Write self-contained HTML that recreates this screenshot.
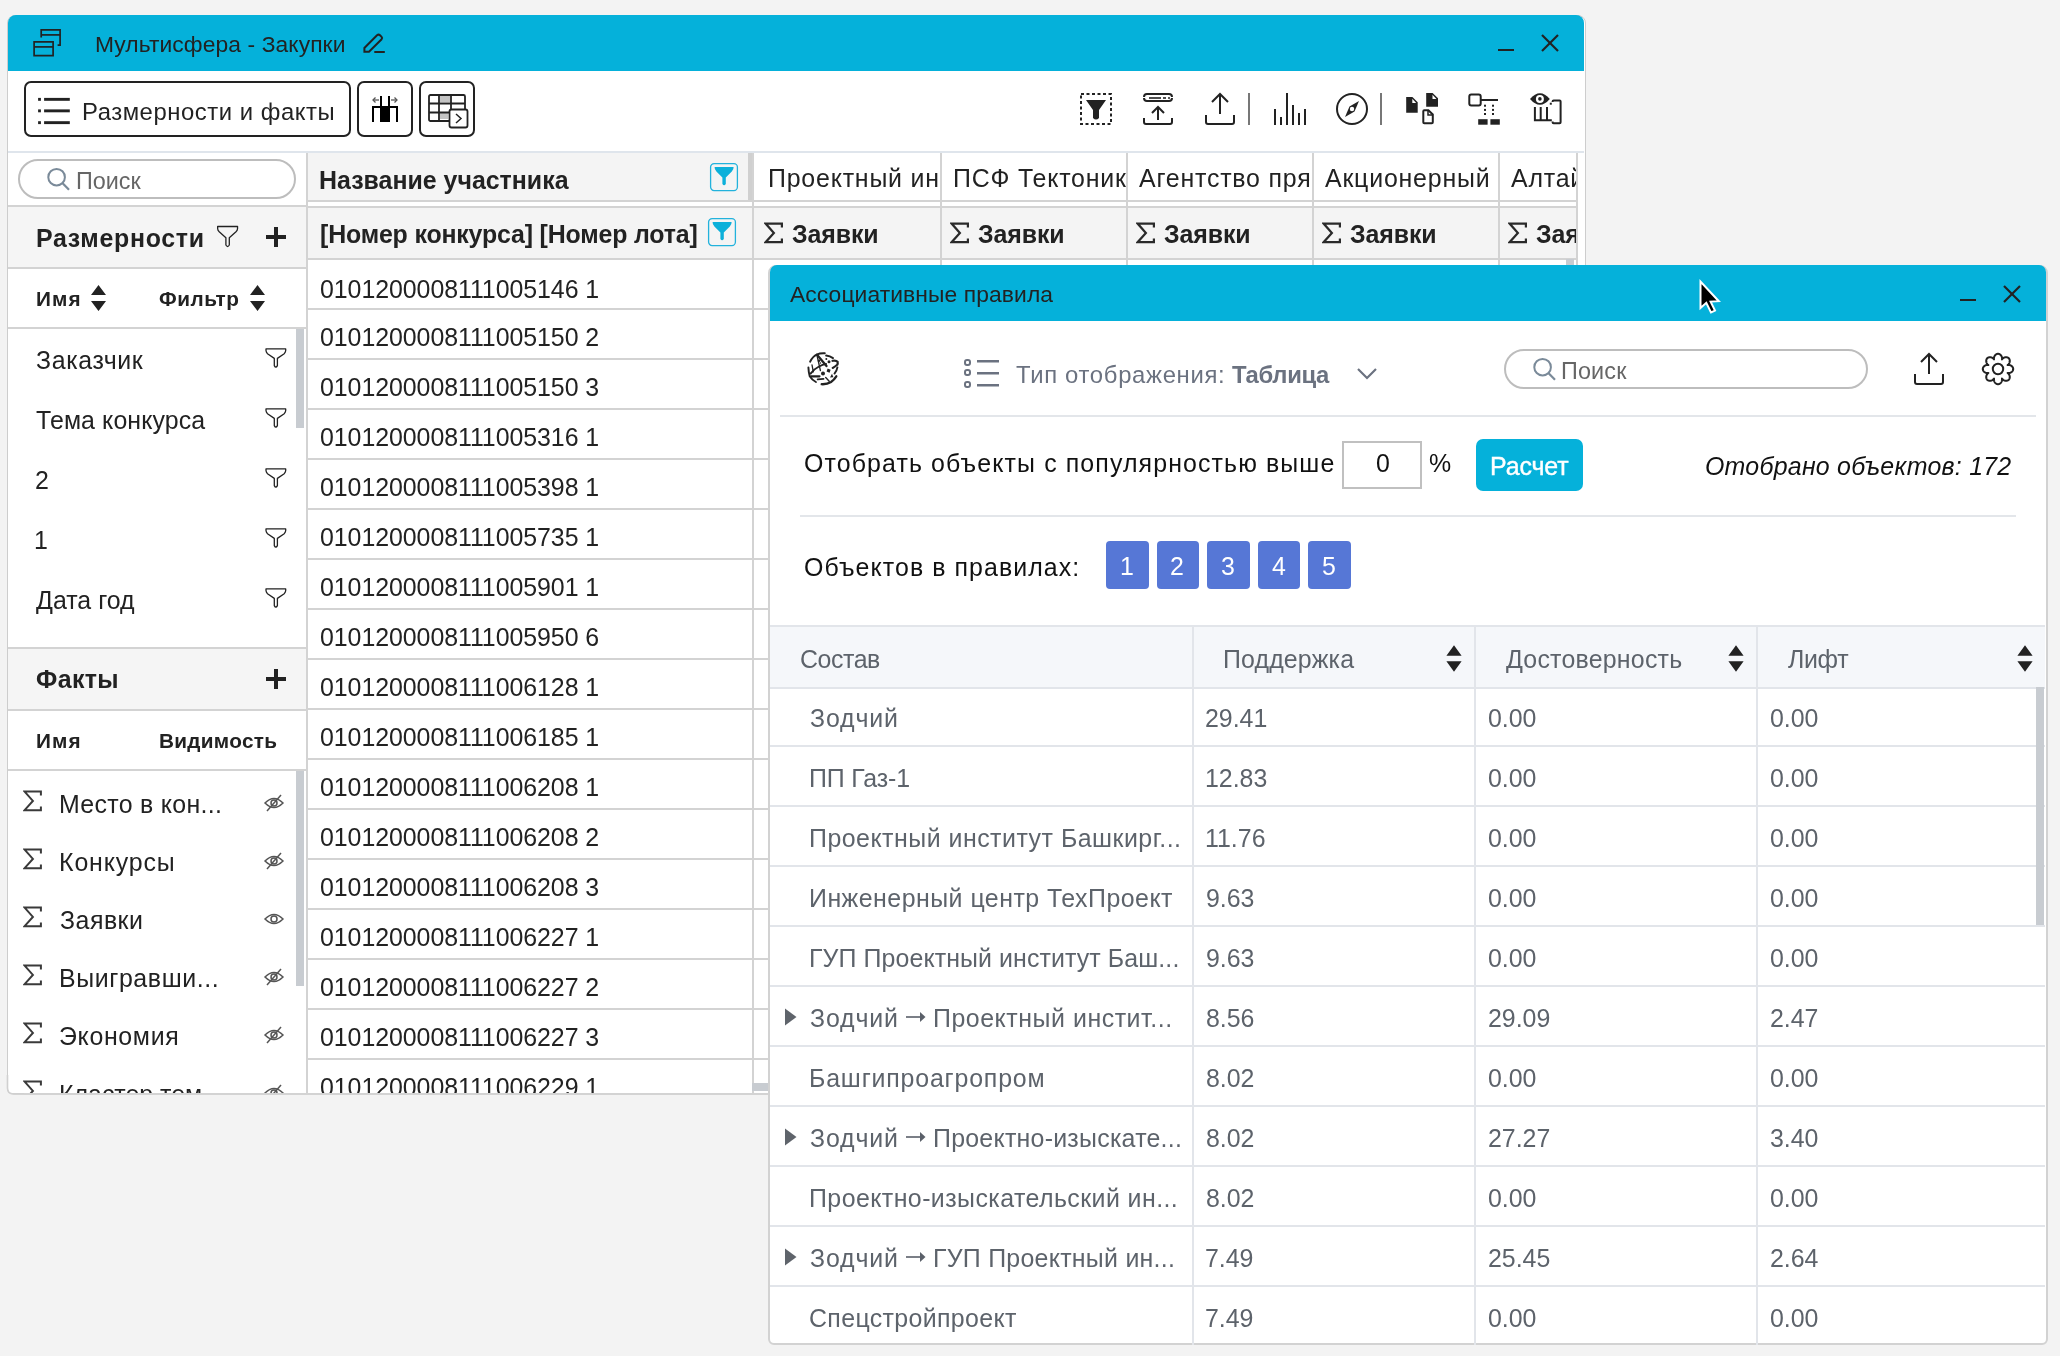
<!DOCTYPE html>
<html><head><meta charset="utf-8"><style>*{margin:0;padding:0}html,body{width:2060px;height:1356px;overflow:hidden;background:#f3f3f3;font-family:"Liberation Sans", sans-serif;color:#222}
.a{position:absolute}.t{position:absolute;will-change:transform;white-space:nowrap;line-height:1;font-family:"Liberation Sans", sans-serif}</style></head><body>
<div class="a" style="left:7px;top:15px;width:1579px;height:1080px;background:#fff;border:1px solid #cdcdcd;box-sizing:border-box;border-radius:8px 8px 6px 6px;overflow:hidden;"></div>
<div class="a" style="left:8px;top:15px;width:1576px;height:56px;background:#05b1da;border-radius:8px 8px 0 0;"></div>
<svg class="a" style="left:30px;top:26px;" width="34" height="34" viewBox="0 0 34 34"><g transform="translate(-30,-26)" fill="none" stroke="#222" stroke-width="1.7"><path d="M34.1 41.8 H53.1 V55.7 H34.1 Z"/><path d="M34.1 46.9 H53.1"/><path d="M41.2 37.4 V29.9 H60.1 V45.2 H57.6"/><path d="M41.2 34.9 H60.1"/></g></svg>
<span class="t" style="left:95.1px;top:33.27px;font-size:22.84px;font-weight:400;color:#222;letter-spacing:0.091px;">Мультисфера - Закупки</span>
<svg class="a" style="left:360px;top:30px;" width="28" height="28" viewBox="0 0 28 28"><path d="M4.4 21.7 V18 L17 5.3 Q18.6 4 20 5.3 L21.6 6.9 Q22.6 8 21.6 9.2 L9 21.7 Z" fill="none" stroke="#222" stroke-width="2" stroke-linejoin="miter"/><rect x="14.3" y="21" width="10.5" height="2" fill="#222"/></svg>
<div class="a" style="left:1498px;top:49px;width:16px;height:2px;background:#222;"></div>
<svg class="a" style="left:1540px;top:33px;" width="20" height="20" viewBox="0 0 20 20"><g stroke="#222" stroke-width="2.2"><line x1="2" y1="2" x2="18" y2="18"/><line x1="18" y1="2" x2="2" y2="18"/></g></svg>
<div class="a" style="left:24px;top:81px;width:327px;height:56px;border:2px solid #222;box-sizing:border-box;border-radius:7px;"></div>
<svg class="a" style="left:36px;top:94px;" width="36" height="32" viewBox="0 0 36 32"><g fill="#222"><rect x="2.1" y="3.9" width="2.8" height="2.9"/><rect x="8.1" y="3.9" width="25.7" height="2.9"/><rect x="2.1" y="15.4" width="2.8" height="2.9"/><rect x="8.1" y="15.4" width="25.7" height="2.9"/><rect x="2.1" y="27.2" width="2.8" height="2.9"/><rect x="8.1" y="27.2" width="25.7" height="2.9"/></g></svg>
<span class="t" style="left:82.0px;top:100.39px;font-size:23.87px;font-weight:400;color:#222;letter-spacing:0.539px;">Размерности и факты</span>
<div class="a" style="left:357px;top:81px;width:56px;height:56px;border:2px solid #222;box-sizing:border-box;border-radius:7px;"></div>
<svg class="a" style="left:370px;top:94px;" width="32" height="30" viewBox="0 0 32 30"><g fill="#000"><rect x="2" y="12" width="26" height="2"/><rect x="2" y="12" width="2" height="16"/><rect x="26" y="12" width="2" height="16"/><rect x="10" y="12" width="10" height="16"/><rect x="10" y="2" width="2" height="12"/><rect x="18" y="2" width="2" height="12"/></g><g stroke="#555" stroke-width="1.3" fill="none"><line x1="3" y1="6" x2="9" y2="6"/><path d="M5.5 3.5 L3 6 L5.5 8.5"/><line x1="21" y1="6" x2="27" y2="6"/><path d="M24.5 3.5 L27 6 L24.5 8.5"/></g></svg>
<div class="a" style="left:419px;top:81px;width:56px;height:56px;border:2px solid #222;box-sizing:border-box;border-radius:7px;"></div>
<svg class="a" style="left:426px;top:92px;" width="44" height="38" viewBox="0 0 44 38"><g><rect x="14" y="3" width="10" height="7" fill="#c4c4c4"/><rect x="14" y="20" width="8" height="7" fill="#c4c4c4"/><g fill="none" stroke="#222" stroke-width="1.8"><rect x="3" y="3" width="36" height="26" rx="1.5"/><line x1="13" y1="3" x2="13" y2="29"/><line x1="25" y1="3" x2="25" y2="29"/><line x1="3" y1="11.5" x2="39" y2="11.5"/><line x1="3" y1="20.5" x2="39" y2="20.5"/></g><rect x="23.5" y="17.5" width="18" height="18" rx="2" fill="#fff" stroke="#222" stroke-width="1.8"/><path d="M30 22 L35 26.5 L30 31" fill="none" stroke="#222" stroke-width="1.5"/></g></svg>
<svg class="a" style="left:1078px;top:91px;" width="36" height="36" viewBox="0 0 36 36"><rect x="3" y="3" width="30" height="30" fill="none" stroke="#222" stroke-width="2" stroke-dasharray="3 2.5"/><path d="M8 9 H28 L21 19 V27 Q18 30 15 27 V19 Z" fill="#222"/></svg>
<svg class="a" style="left:1141px;top:91px;" width="34" height="36" viewBox="0 0 34 36"><g fill="none" stroke="#222" stroke-width="2"><path d="M3 6 Q3 3 6 3 H28 Q31 3 31 6"/><path d="M3 7 Q3 10 6 10 H28 Q31 10 31 7"/><path d="M3 27 V31 Q3 33 5 33 H29 Q31 33 31 31 V27"/><line x1="17" y1="16" x2="17" y2="29"/><path d="M11 22 L17 16 L23 22"/></g><g stroke="#222" stroke-width="1.6"><line x1="8" y1="7" x2="20" y2="7"/><line x1="22" y1="7" x2="25" y2="7"/><line x1="27" y1="7" x2="29" y2="7"/></g></svg>
<svg class="a" style="left:1203px;top:91px;" width="34" height="36" viewBox="0 0 34 36"><g fill="none" stroke="#222" stroke-width="2"><path d="M3 24 V31 Q3 33 5 33 H29 Q31 33 31 31 V24"/><line x1="17" y1="3" x2="17" y2="23"/><path d="M9 11 L17 3 L25 11"/></g></svg>
<div class="a" style="left:1248px;top:93px;width:2px;height:32px;background:#777;"></div>
<svg class="a" style="left:1272px;top:91px;" width="36" height="36" viewBox="0 0 36 36"><g fill="#222"><rect x="2" y="18" width="2" height="16"/><rect x="8" y="26" width="2" height="8"/><rect x="14" y="2" width="2" height="32"/><rect x="20" y="14" width="2" height="20"/><rect x="26" y="22" width="2" height="12"/><rect x="32" y="18" width="2" height="16"/></g></svg>
<svg class="a" style="left:1334px;top:91px;" width="36" height="36" viewBox="0 0 36 36"><circle cx="18" cy="18" r="15" fill="none" stroke="#222" stroke-width="2"/><path d="M25 10 L20.5 20.5 L11 26 L15.5 15.5 Z" fill="#222"/><circle cx="18" cy="18" r="2.2" fill="#fff"/></svg>
<div class="a" style="left:1380px;top:93px;width:2px;height:32px;background:#777;"></div>
<svg class="a" style="left:1400px;top:88px;" width="170" height="42" viewBox="0 0 170 42"><g transform="translate(-1400,-88)">
<path d="M1406.2 97.1 H1412.4 L1417.7 102.2 V112.8 H1406.2 Z" fill="#222"/><path d="M1412.3 98.8 L1416.2 102.9 H1412.3 Z" fill="#fff"/>
<path d="M1426.2 93.1 H1432.6 L1438 98.2 V106.8 H1426.2 Z" fill="#222"/><path d="M1432.5 94.8 L1436.4 98.9 H1432.5 Z" fill="#fff"/>
<path d="M1423.3 111.3 Q1423.3 110.3 1424.3 110.3 H1428.4 L1432.8 114.5 V122.3 Q1432.8 123.3 1431.8 123.3 H1424.3 Q1423.3 123.3 1423.3 122.3 Z" fill="none" stroke="#222" stroke-width="2"/><path d="M1428 110.5 V115 H1432.5" fill="none" stroke="#222" stroke-width="1.5"/>
<rect x="1469.3" y="94.4" width="11.4" height="11.2" rx="2" fill="none" stroke="#222" stroke-width="2"/>
<rect x="1480.7" y="99" width="17.3" height="2" fill="#222"/>
<g fill="#222"><rect x="1484" y="104.7" width="2" height="2"/><rect x="1484" y="108.9" width="2" height="2"/><rect x="1484" y="113" width="2" height="2"/><rect x="1492" y="104.7" width="2" height="2"/><rect x="1492" y="108.9" width="2" height="2"/><rect x="1492" y="113" width="2" height="2"/>
<rect x="1478.2" y="119.2" width="9.4" height="5.5"/><rect x="1490.4" y="119.2" width="9.4" height="5.5"/></g>
<path d="M1530 99 Q1540 87.5 1549.8 99 Q1540 110.5 1530 99 Z" fill="#222"/><circle cx="1539.9" cy="98.9" r="4" fill="#fff"/><circle cx="1539.9" cy="98.9" r="1.8" fill="#222"/>
<g fill="none" stroke="#222" stroke-width="2"><path d="M1534.9 107 V120.2 H1551.8"/><path d="M1540.7 107 V120.2"/><path d="M1547 107 V120.2"/>
<path d="M1552.6 102 V101.6 Q1552.6 100.6 1553.6 100.6 H1559.6 Q1560.6 100.6 1560.6 101.6 V122.3 Q1560.6 123.3 1559.6 123.3 H1553.6 Q1552.6 123.3 1552.6 122.3 V121.5"/></g>
<rect x="1549.8" y="102.7" width="2" height="2" fill="#222"/>
</g></svg>
<div class="a" style="left:8px;top:151px;width:1576px;height:2px;background:#dfe5ec;"></div>
<div class="a" style="left:306px;top:153px;width:2px;height:941px;background:#d3d3d3;"></div>
<div class="a" style="left:18px;top:159px;width:278px;height:40px;border:2px solid #bdbdbd;box-sizing:border-box;border-radius:20px;"></div>
<svg class="a" style="left:44px;top:165px;" width="30" height="30" viewBox="0 0 30 30"><circle cx="12.6" cy="12.2" r="8.3" fill="none" stroke="#7a8a99" stroke-width="2"/><line x1="18.6" y1="18.2" x2="25" y2="24.8" stroke="#7a8a99" stroke-width="2.2"/></svg>
<span class="t" style="left:75.7px;top:170.03px;font-size:23.36px;font-weight:400;color:#666;letter-spacing:0.011px;">Поиск</span>
<div class="a" style="left:8px;top:205px;width:298px;height:2px;background:#d3d3d3;"></div>
<div class="a" style="left:8px;top:207px;width:298px;height:60px;background:#f5f5f5;"></div>
<span class="t" style="left:35.6px;top:226.41px;font-size:24.91px;font-weight:700;color:#222;letter-spacing:0.711px;">Размерности</span>
<svg class="a" style="left:214px;top:223px;" width="28" height="28" viewBox="0 0 28 28"><path d="M3.65 3.5 H23.55 V5.5 Q23.55 7.2 22 8.8 L15.3 14.7 V22 Q13.6 25 11.9 22 V14.7 L5.2 8.8 Q3.65 7.2 3.65 5.5 Z" fill="none" stroke="#222" stroke-width="1.3" stroke-linejoin="round"/></svg>
<div class="a" style="left:266px;top:235px;width:20px;height:4px;background:#222;"></div>
<div class="a" style="left:274px;top:227px;width:4px;height:20px;background:#222;"></div>
<div class="a" style="left:8px;top:267px;width:298px;height:2px;background:#d3d3d3;"></div>
<span class="t" style="left:35.9px;top:289.03px;font-size:20.76px;font-weight:700;color:#222;letter-spacing:1.077px;">Имя</span>
<svg class="a" style="left:89px;top:283px;" width="20" height="30" viewBox="0 0 20 30"><path d="M2 12 L9.5 2 L17 12 Z M2 18 L9.5 28 L17 18 Z" fill="#222"/></svg>
<span class="t" style="left:159.3px;top:289.03px;font-size:20.76px;font-weight:700;color:#222;letter-spacing:0.510px;">Фильтр</span>
<svg class="a" style="left:248px;top:283px;" width="20" height="30" viewBox="0 0 20 30"><path d="M2 12 L9.5 2 L17 12 Z M2 18 L9.5 28 L17 18 Z" fill="#222"/></svg>
<div class="a" style="left:8px;top:327px;width:298px;height:2px;background:#d3d3d3;"></div>
<span class="t" style="left:35.5px;top:347.51px;font-size:24.91px;font-weight:400;color:#222;letter-spacing:0.628px;">Заказчик</span>
<svg class="a" style="left:263px;top:346px;" width="26" height="24" viewBox="0 0 26 24"><path d="M3 2.9 H22.7 V4.6 Q22.7 6.2 21.2 7.7 L14.4 12.4 V19.6 Q12.85 22.6 11.3 19.6 V12.4 L4.5 7.7 Q3 6.2 3 4.6 Z" fill="none" stroke="#222" stroke-width="1.3" stroke-linejoin="round"/></svg>
<span class="t" style="left:35.7px;top:407.51px;font-size:24.91px;font-weight:400;color:#222;letter-spacing:0.108px;">Тема конкурса</span>
<svg class="a" style="left:263px;top:406px;" width="26" height="24" viewBox="0 0 26 24"><path d="M3 2.9 H22.7 V4.6 Q22.7 6.2 21.2 7.7 L14.4 12.4 V19.6 Q12.85 22.6 11.3 19.6 V12.4 L4.5 7.7 Q3 6.2 3 4.6 Z" fill="none" stroke="#222" stroke-width="1.3" stroke-linejoin="round"/></svg>
<span class="t" style="left:35.0px;top:467.51px;font-size:24.91px;font-weight:400;color:#222;letter-spacing:0.000px;">2</span>
<svg class="a" style="left:263px;top:466px;" width="26" height="24" viewBox="0 0 26 24"><path d="M3 2.9 H22.7 V4.6 Q22.7 6.2 21.2 7.7 L14.4 12.4 V19.6 Q12.85 22.6 11.3 19.6 V12.4 L4.5 7.7 Q3 6.2 3 4.6 Z" fill="none" stroke="#222" stroke-width="1.3" stroke-linejoin="round"/></svg>
<span class="t" style="left:34.4px;top:527.51px;font-size:24.91px;font-weight:400;color:#222;letter-spacing:0.000px;">1</span>
<svg class="a" style="left:263px;top:526px;" width="26" height="24" viewBox="0 0 26 24"><path d="M3 2.9 H22.7 V4.6 Q22.7 6.2 21.2 7.7 L14.4 12.4 V19.6 Q12.85 22.6 11.3 19.6 V12.4 L4.5 7.7 Q3 6.2 3 4.6 Z" fill="none" stroke="#222" stroke-width="1.3" stroke-linejoin="round"/></svg>
<span class="t" style="left:36.1px;top:587.51px;font-size:24.91px;font-weight:400;color:#222;letter-spacing:0.022px;">Дата год</span>
<svg class="a" style="left:263px;top:586px;" width="26" height="24" viewBox="0 0 26 24"><path d="M3 2.9 H22.7 V4.6 Q22.7 6.2 21.2 7.7 L14.4 12.4 V19.6 Q12.85 22.6 11.3 19.6 V12.4 L4.5 7.7 Q3 6.2 3 4.6 Z" fill="none" stroke="#222" stroke-width="1.3" stroke-linejoin="round"/></svg>
<div class="a" style="left:296px;top:329px;width:8px;height:99px;background:#c8ccd1;"></div>
<div class="a" style="left:8px;top:647px;width:298px;height:2px;background:#d3d3d3;"></div>
<div class="a" style="left:8px;top:649px;width:298px;height:61px;background:#f5f5f5;"></div>
<span class="t" style="left:36.4px;top:667.41px;font-size:24.91px;font-weight:700;color:#222;letter-spacing:0.389px;">Факты</span>
<div class="a" style="left:266px;top:677.2px;width:20px;height:4px;background:#222;"></div>
<div class="a" style="left:274px;top:669.2px;width:4px;height:20px;background:#222;"></div>
<div class="a" style="left:8px;top:709px;width:298px;height:2px;background:#d3d3d3;"></div>
<span class="t" style="left:35.9px;top:731.03px;font-size:20.76px;font-weight:700;color:#222;letter-spacing:1.077px;">Имя</span>
<span class="t" style="left:159.4px;top:731.03px;font-size:20.76px;font-weight:700;color:#222;letter-spacing:0.293px;">Видимость</span>
<div class="a" style="left:8px;top:769px;width:298px;height:2px;background:#d3d3d3;"></div>
<svg class="a" style="left:22.7px;top:790px;" width="20" height="23" viewBox="0 0 20 23"><path d="M17.9 5.4 V1.6 H1.6 L9.9 10.9 L1.6 20.2 H17.9 V16.4" fill="none" stroke="#3a3a3a" stroke-width="2.0" stroke-linejoin="miter"/></svg>
<span class="t" style="left:58.6px;top:791.51px;font-size:24.91px;font-weight:400;color:#222;letter-spacing:0.298px;">Место в кон...</span>
<svg class="a" style="left:263px;top:793px;" width="22" height="20" viewBox="0 0 22 20"><path d="M2 10 Q11 1 20 10 Q11 19 2 10 Z" fill="none" stroke="#555" stroke-width="1.5"/><circle cx="11" cy="10" r="3" fill="none" stroke="#555" stroke-width="1.5"/><line x1="4" y1="18" x2="18" y2="2" stroke="#555" stroke-width="1.5"/></svg>
<svg class="a" style="left:22.7px;top:848px;" width="20" height="23" viewBox="0 0 20 23"><path d="M17.9 5.4 V1.6 H1.6 L9.9 10.9 L1.6 20.2 H17.9 V16.4" fill="none" stroke="#3a3a3a" stroke-width="2.0" stroke-linejoin="miter"/></svg>
<span class="t" style="left:58.6px;top:849.51px;font-size:24.91px;font-weight:400;color:#222;letter-spacing:0.871px;">Конкурсы</span>
<svg class="a" style="left:263px;top:851px;" width="22" height="20" viewBox="0 0 22 20"><path d="M2 10 Q11 1 20 10 Q11 19 2 10 Z" fill="none" stroke="#555" stroke-width="1.5"/><circle cx="11" cy="10" r="3" fill="none" stroke="#555" stroke-width="1.5"/><line x1="4" y1="18" x2="18" y2="2" stroke="#555" stroke-width="1.5"/></svg>
<svg class="a" style="left:22.7px;top:906px;" width="20" height="23" viewBox="0 0 20 23"><path d="M17.9 5.4 V1.6 H1.6 L9.9 10.9 L1.6 20.2 H17.9 V16.4" fill="none" stroke="#3a3a3a" stroke-width="2.0" stroke-linejoin="miter"/></svg>
<span class="t" style="left:59.8px;top:907.51px;font-size:24.91px;font-weight:400;color:#222;letter-spacing:0.501px;">Заявки</span>
<svg class="a" style="left:263px;top:909px;" width="22" height="20" viewBox="0 0 22 20"><path d="M2 10 Q11 1 20 10 Q11 19 2 10 Z" fill="none" stroke="#555" stroke-width="1.5"/><circle cx="11" cy="10" r="3" fill="none" stroke="#555" stroke-width="1.5"/></svg>
<svg class="a" style="left:22.7px;top:964px;" width="20" height="23" viewBox="0 0 20 23"><path d="M17.9 5.4 V1.6 H1.6 L9.9 10.9 L1.6 20.2 H17.9 V16.4" fill="none" stroke="#3a3a3a" stroke-width="2.0" stroke-linejoin="miter"/></svg>
<span class="t" style="left:58.6px;top:965.51px;font-size:24.91px;font-weight:400;color:#222;letter-spacing:0.601px;">Выигравши...</span>
<svg class="a" style="left:263px;top:967px;" width="22" height="20" viewBox="0 0 22 20"><path d="M2 10 Q11 1 20 10 Q11 19 2 10 Z" fill="none" stroke="#555" stroke-width="1.5"/><circle cx="11" cy="10" r="3" fill="none" stroke="#555" stroke-width="1.5"/><line x1="4" y1="18" x2="18" y2="2" stroke="#555" stroke-width="1.5"/></svg>
<svg class="a" style="left:22.7px;top:1022px;" width="20" height="23" viewBox="0 0 20 23"><path d="M17.9 5.4 V1.6 H1.6 L9.9 10.9 L1.6 20.2 H17.9 V16.4" fill="none" stroke="#3a3a3a" stroke-width="2.0" stroke-linejoin="miter"/></svg>
<span class="t" style="left:59.3px;top:1023.51px;font-size:24.91px;font-weight:400;color:#222;letter-spacing:0.663px;">Экономия</span>
<svg class="a" style="left:263px;top:1025px;" width="22" height="20" viewBox="0 0 22 20"><path d="M2 10 Q11 1 20 10 Q11 19 2 10 Z" fill="none" stroke="#555" stroke-width="1.5"/><circle cx="11" cy="10" r="3" fill="none" stroke="#555" stroke-width="1.5"/><line x1="4" y1="18" x2="18" y2="2" stroke="#555" stroke-width="1.5"/></svg>
<svg class="a" style="left:22.7px;top:1080px;" width="20" height="23" viewBox="0 0 20 23"><path d="M17.9 5.4 V1.6 H1.6 L9.9 10.9 L1.6 20.2 H17.9 V16.4" fill="none" stroke="#3a3a3a" stroke-width="2.0" stroke-linejoin="miter"/></svg>
<span class="t" style="left:58.6px;top:1081.51px;font-size:24.91px;font-weight:400;color:#222;letter-spacing:0.000px;">Кластер тем</span>
<svg class="a" style="left:263px;top:1083px;" width="22" height="20" viewBox="0 0 22 20"><path d="M2 10 Q11 1 20 10 Q11 19 2 10 Z" fill="none" stroke="#555" stroke-width="1.5"/><circle cx="11" cy="10" r="3" fill="none" stroke="#555" stroke-width="1.5"/><line x1="4" y1="18" x2="18" y2="2" stroke="#555" stroke-width="1.5"/></svg>
<div class="a" style="left:296px;top:771px;width:8px;height:215px;background:#c8ccd1;"></div>
<div class="a" style="left:308px;top:153px;width:445px;height:48px;background:#f4f4f4;"></div>
<div class="a" style="left:748px;top:153px;width:5px;height:48px;background:#d0d0d0;"></div>
<div class="a" style="left:308px;top:200px;width:445px;height:2px;background:#d3d3d3;"></div>
<span class="t" style="left:319.2px;top:167.51px;font-size:24.91px;font-weight:700;color:#222;letter-spacing:0.008px;">Название участника</span>
<svg class="a" style="left:709px;top:162px;" width="30" height="30" viewBox="0 0 30 30"><rect x="1.6" y="1.6" width="26.8" height="27" rx="3.5" fill="none" stroke="#22b2dc" stroke-width="1.3"/><path d="M5.6 5 H24.6 Q24.8 7.6 22.8 9.6 L16.8 15.6 V22 Q15.1 24.6 13.4 22 V15.6 L7.4 9.6 Q5.4 7.6 5.6 5 Z" fill="#0cb0da"/></svg>
<div class="a" style="left:308px;top:206px;width:445px;height:2px;background:#d3d3d3;"></div>
<div class="a" style="left:308px;top:208px;width:445px;height:51px;background:#f4f4f4;"></div>
<div class="a" style="left:308px;top:258px;width:445px;height:2px;background:#d3d3d3;"></div>
<span class="t" style="left:319.5px;top:222.01px;font-size:24.91px;font-weight:700;color:#222;letter-spacing:-0.165px;">[Номер конкурса] [Номер лота]</span>
<svg class="a" style="left:706.5px;top:217px;" width="30" height="30" viewBox="0 0 30 30"><rect x="1.6" y="1.6" width="26.8" height="27" rx="3.5" fill="none" stroke="#22b2dc" stroke-width="1.3"/><path d="M5.6 5 H24.6 Q24.8 7.6 22.8 9.6 L16.8 15.6 V22 Q15.1 24.6 13.4 22 V15.6 L7.4 9.6 Q5.4 7.6 5.6 5 Z" fill="#0cb0da"/></svg>
<div class="a" style="left:752px;top:153px;width:2px;height:941px;background:#d3d3d3;"></div>
<span class="t" style="left:319.9px;top:276.51px;font-size:24.91px;font-weight:400;color:#222;letter-spacing:0.000px;letter-spacing:-0.054px;">0101200008111005146 1</span>
<div class="a" style="left:308px;top:308px;width:445px;height:2px;background:#d3d3d3;"></div>
<div class="a" style="left:754px;top:308px;width:20px;height:2px;background:#d3d3d3;"></div>
<span class="t" style="left:319.9px;top:324.61px;font-size:24.91px;font-weight:400;color:#222;letter-spacing:0.000px;letter-spacing:-0.054px;">0101200008111005150 2</span>
<div class="a" style="left:308px;top:358px;width:445px;height:2px;background:#d3d3d3;"></div>
<div class="a" style="left:754px;top:358px;width:20px;height:2px;background:#d3d3d3;"></div>
<span class="t" style="left:319.9px;top:374.61px;font-size:24.91px;font-weight:400;color:#222;letter-spacing:0.000px;letter-spacing:-0.054px;">0101200008111005150 3</span>
<div class="a" style="left:308px;top:408px;width:445px;height:2px;background:#d3d3d3;"></div>
<div class="a" style="left:754px;top:408px;width:20px;height:2px;background:#d3d3d3;"></div>
<span class="t" style="left:319.9px;top:424.61px;font-size:24.91px;font-weight:400;color:#222;letter-spacing:0.000px;letter-spacing:-0.054px;">0101200008111005316 1</span>
<div class="a" style="left:308px;top:458px;width:445px;height:2px;background:#d3d3d3;"></div>
<div class="a" style="left:754px;top:458px;width:20px;height:2px;background:#d3d3d3;"></div>
<span class="t" style="left:319.9px;top:474.61px;font-size:24.91px;font-weight:400;color:#222;letter-spacing:0.000px;letter-spacing:-0.054px;">0101200008111005398 1</span>
<div class="a" style="left:308px;top:508px;width:445px;height:2px;background:#d3d3d3;"></div>
<div class="a" style="left:754px;top:508px;width:20px;height:2px;background:#d3d3d3;"></div>
<span class="t" style="left:319.9px;top:524.61px;font-size:24.91px;font-weight:400;color:#222;letter-spacing:0.000px;letter-spacing:-0.054px;">0101200008111005735 1</span>
<div class="a" style="left:308px;top:558px;width:445px;height:2px;background:#d3d3d3;"></div>
<div class="a" style="left:754px;top:558px;width:20px;height:2px;background:#d3d3d3;"></div>
<span class="t" style="left:319.9px;top:574.61px;font-size:24.91px;font-weight:400;color:#222;letter-spacing:0.000px;letter-spacing:-0.054px;">0101200008111005901 1</span>
<div class="a" style="left:308px;top:608px;width:445px;height:2px;background:#d3d3d3;"></div>
<div class="a" style="left:754px;top:608px;width:20px;height:2px;background:#d3d3d3;"></div>
<span class="t" style="left:319.9px;top:624.61px;font-size:24.91px;font-weight:400;color:#222;letter-spacing:0.000px;letter-spacing:-0.054px;">0101200008111005950 6</span>
<div class="a" style="left:308px;top:658px;width:445px;height:2px;background:#d3d3d3;"></div>
<div class="a" style="left:754px;top:658px;width:20px;height:2px;background:#d3d3d3;"></div>
<span class="t" style="left:319.9px;top:674.61px;font-size:24.91px;font-weight:400;color:#222;letter-spacing:0.000px;letter-spacing:-0.054px;">0101200008111006128 1</span>
<div class="a" style="left:308px;top:708px;width:445px;height:2px;background:#d3d3d3;"></div>
<div class="a" style="left:754px;top:708px;width:20px;height:2px;background:#d3d3d3;"></div>
<span class="t" style="left:319.9px;top:724.61px;font-size:24.91px;font-weight:400;color:#222;letter-spacing:0.000px;letter-spacing:-0.054px;">0101200008111006185 1</span>
<div class="a" style="left:308px;top:758px;width:445px;height:2px;background:#d3d3d3;"></div>
<div class="a" style="left:754px;top:758px;width:20px;height:2px;background:#d3d3d3;"></div>
<span class="t" style="left:319.9px;top:774.61px;font-size:24.91px;font-weight:400;color:#222;letter-spacing:0.000px;letter-spacing:-0.054px;">0101200008111006208 1</span>
<div class="a" style="left:308px;top:808px;width:445px;height:2px;background:#d3d3d3;"></div>
<div class="a" style="left:754px;top:808px;width:20px;height:2px;background:#d3d3d3;"></div>
<span class="t" style="left:319.9px;top:824.61px;font-size:24.91px;font-weight:400;color:#222;letter-spacing:0.000px;letter-spacing:-0.054px;">0101200008111006208 2</span>
<div class="a" style="left:308px;top:858px;width:445px;height:2px;background:#d3d3d3;"></div>
<div class="a" style="left:754px;top:858px;width:20px;height:2px;background:#d3d3d3;"></div>
<span class="t" style="left:319.9px;top:874.61px;font-size:24.91px;font-weight:400;color:#222;letter-spacing:0.000px;letter-spacing:-0.054px;">0101200008111006208 3</span>
<div class="a" style="left:308px;top:908px;width:445px;height:2px;background:#d3d3d3;"></div>
<div class="a" style="left:754px;top:908px;width:20px;height:2px;background:#d3d3d3;"></div>
<span class="t" style="left:319.9px;top:924.61px;font-size:24.91px;font-weight:400;color:#222;letter-spacing:0.000px;letter-spacing:-0.054px;">0101200008111006227 1</span>
<div class="a" style="left:308px;top:958px;width:445px;height:2px;background:#d3d3d3;"></div>
<div class="a" style="left:754px;top:958px;width:20px;height:2px;background:#d3d3d3;"></div>
<span class="t" style="left:319.9px;top:974.61px;font-size:24.91px;font-weight:400;color:#222;letter-spacing:0.000px;letter-spacing:-0.054px;">0101200008111006227 2</span>
<div class="a" style="left:308px;top:1008px;width:445px;height:2px;background:#d3d3d3;"></div>
<div class="a" style="left:754px;top:1008px;width:20px;height:2px;background:#d3d3d3;"></div>
<span class="t" style="left:319.9px;top:1024.61px;font-size:24.91px;font-weight:400;color:#222;letter-spacing:0.000px;letter-spacing:-0.054px;">0101200008111006227 3</span>
<div class="a" style="left:308px;top:1058px;width:445px;height:2px;background:#d3d3d3;"></div>
<div class="a" style="left:754px;top:1058px;width:20px;height:2px;background:#d3d3d3;"></div>
<span class="t" style="left:319.9px;top:1074.61px;font-size:24.91px;font-weight:400;color:#222;letter-spacing:0.000px;letter-spacing:-0.054px;">0101200008111006229 1</span>
<div class="a" style="left:308px;top:1108px;width:445px;height:2px;background:#d3d3d3;"></div>
<div class="a" style="left:754px;top:1108px;width:20px;height:2px;background:#d3d3d3;"></div>
<div class="a" style="left:754px;top:206px;width:823px;height:2px;background:#d3d3d3;"></div>
<div class="a" style="left:754px;top:208px;width:823px;height:51px;background:#f4f4f4;"></div>
<div class="a" style="left:754px;top:258px;width:823px;height:2px;background:#d3d3d3;"></div>
<div class="a" style="left:754px;top:200px;width:823px;height:2px;background:#d3d3d3;"></div>
<div class="a" style="left:754px;top:153px;width:186px;height:47px;overflow:hidden"><span class="t" style="left:13.9px;top:12.913684999999997px;font-size:24.91px;letter-spacing:0.800px">Проектный институт</span></div>
<div class="a" style="left:754px;top:208px;width:186px;height:50px;overflow:hidden"><svg class="a" style="left:10px;top:13.5px" width="20" height="23"><path d="M17.9 5.4 V1.6 H1.6 L9.9 10.9 L1.6 20.2 H17.9 V16.4" fill="none" stroke="#2a2a2a" stroke-width="2.2" stroke-linejoin="miter"/></svg><span class="t" style="left:37.8px;top:13.913684999999997px;font-size:24.91px;font-weight:700;letter-spacing:-0.09829296875000182px">Заявки</span></div>
<div class="a" style="left:940px;top:153px;width:186px;height:47px;overflow:hidden"><span class="t" style="left:13.2px;top:12.913684999999997px;font-size:24.91px;letter-spacing:0.800px">ПСФ Тектоника</span></div>
<div class="a" style="left:940px;top:208px;width:186px;height:50px;overflow:hidden"><svg class="a" style="left:10px;top:13.5px" width="20" height="23"><path d="M17.9 5.4 V1.6 H1.6 L9.9 10.9 L1.6 20.2 H17.9 V16.4" fill="none" stroke="#2a2a2a" stroke-width="2.2" stroke-linejoin="miter"/></svg><span class="t" style="left:37.8px;top:13.913684999999997px;font-size:24.91px;font-weight:700;letter-spacing:-0.09829296875000182px">Заявки</span></div>
<div class="a" style="left:940px;top:153px;width:2px;height:941px;background:#d3d3d3;"></div>
<div class="a" style="left:1126px;top:153px;width:186px;height:47px;overflow:hidden"><span class="t" style="left:13.2px;top:12.913684999999997px;font-size:24.91px;letter-spacing:0.800px">Агентство прямых</span></div>
<div class="a" style="left:1126px;top:208px;width:186px;height:50px;overflow:hidden"><svg class="a" style="left:10px;top:13.5px" width="20" height="23"><path d="M17.9 5.4 V1.6 H1.6 L9.9 10.9 L1.6 20.2 H17.9 V16.4" fill="none" stroke="#2a2a2a" stroke-width="2.2" stroke-linejoin="miter"/></svg><span class="t" style="left:37.8px;top:13.913684999999997px;font-size:24.91px;font-weight:700;letter-spacing:-0.09829296875000182px">Заявки</span></div>
<div class="a" style="left:1126px;top:153px;width:2px;height:941px;background:#d3d3d3;"></div>
<div class="a" style="left:1312px;top:153px;width:186px;height:47px;overflow:hidden"><span class="t" style="left:13.2px;top:12.913684999999997px;font-size:24.91px;letter-spacing:0.800px">Акционерный</span></div>
<div class="a" style="left:1312px;top:208px;width:186px;height:50px;overflow:hidden"><svg class="a" style="left:10px;top:13.5px" width="20" height="23"><path d="M17.9 5.4 V1.6 H1.6 L9.9 10.9 L1.6 20.2 H17.9 V16.4" fill="none" stroke="#2a2a2a" stroke-width="2.2" stroke-linejoin="miter"/></svg><span class="t" style="left:37.8px;top:13.913684999999997px;font-size:24.91px;font-weight:700;letter-spacing:-0.09829296875000182px">Заявки</span></div>
<div class="a" style="left:1312px;top:153px;width:2px;height:941px;background:#d3d3d3;"></div>
<div class="a" style="left:1498px;top:153px;width:79px;height:47px;overflow:hidden"><span class="t" style="left:13.2px;top:12.913684999999997px;font-size:24.91px;letter-spacing:0.800px">Алтай</span></div>
<div class="a" style="left:1498px;top:208px;width:79px;height:50px;overflow:hidden"><svg class="a" style="left:10px;top:13.5px" width="20" height="23"><path d="M17.9 5.4 V1.6 H1.6 L9.9 10.9 L1.6 20.2 H17.9 V16.4" fill="none" stroke="#2a2a2a" stroke-width="2.2" stroke-linejoin="miter"/></svg><span class="t" style="left:37.8px;top:13.913684999999997px;font-size:24.91px;font-weight:700;letter-spacing:-0.09829296875000182px">Заявки</span></div>
<div class="a" style="left:1498px;top:153px;width:2px;height:941px;background:#d3d3d3;"></div>
<div class="a" style="left:1577px;top:153px;width:7px;height:941px;background:#fff;"></div>
<div class="a" style="left:1566px;top:259px;width:8px;height:10px;background:#c8ccd1;"></div>
<div class="a" style="left:1576px;top:153px;width:2px;height:941px;background:#d3d3d3;"></div>
<div class="a" style="left:752px;top:1083px;width:17px;height:8px;background:#c8ccd1;"></div>
<div class="a" style="left:8px;top:1093px;width:1576px;height:2px;background:#d3d3d3;"></div>
<div class="a" style="left:0px;top:1095px;width:769px;height:261px;background:#f3f3f3;"></div>
<svg class="a" style="left:0px;top:1075px;" width="24" height="25" viewBox="0 0 24 25"><path d="M0 0 H7 V13 Q7 19.5 13.5 19.5 H24 V25 H0 Z" fill="#f3f3f3"/><path d="M7.5 0 V13 Q7.5 19 13.5 19 H24" fill="none" stroke="#d0d0d0" stroke-width="1.6"/></svg>
<div class="a" style="left:768px;top:265px;width:1280px;height:1080px;background:#fff;border:2px solid #d2d2d2;box-sizing:border-box;border-radius:8px 8px 6px 6px;"></div>
<div class="a" style="left:770px;top:265px;width:1276px;height:56px;background:#05b1da;border-radius:7px 7px 0 0;"></div>
<span class="t" style="left:790.4px;top:283.07px;font-size:22.84px;font-weight:400;color:#222;letter-spacing:0.098px;">Ассоциативные правила</span>
<div class="a" style="left:1960px;top:299px;width:16px;height:2px;background:#222;"></div>
<svg class="a" style="left:2002px;top:284px;" width="20" height="20" viewBox="0 0 20 20"><g stroke="#222" stroke-width="2.2"><line x1="2" y1="2" x2="18" y2="18"/><line x1="18" y1="2" x2="2" y2="18"/></g></svg>
<svg class="a" style="left:1690px;top:272px;" width="40" height="50" viewBox="0 0 40 50"><path d="M10.5 9.5 L10.5 36 L16.3 30.8 L21 40.5 L25 38.6 L20.6 29.6 L28.8 29.2 Z" fill="#000" stroke="#fff" stroke-width="2" stroke-linejoin="miter"/></svg>
<svg class="a" style="left:800px;top:345px;" width="45" height="45" viewBox="0 0 45 45"><g transform="translate(-800,-345)" fill="none" stroke="#222" stroke-width="1.9" stroke-linecap="round">
<path d="M810.1 361.7 Q813 356 816.8 354.6 Q820 353 824.8 353.3"/>
<path d="M826.1 355.5 Q830 356 833 358.1"/>
<path d="M832.5 360.8 Q836 360 837.6 361.7 Q838 363.5 837.2 364.8 Q835 366.8 832.7 367.9" stroke-width="2.2"/>
<path d="M837.4 367.4 Q836.8 371 834.5 373.6"/>
<path d="M836.3 376.3 Q834 380 831 382 Q827 384.5 821.7 384.2" stroke-width="2.3"/>
<path d="M808.4 367.4 Q808.6 372.5 809.7 376.3 Q812 380 815.9 382"/>
<path d="M816.8 354.6 L826.5 366.1" stroke-width="2.3"/>
<path d="M816.8 354.6 L820.4 370.5" stroke-width="1.3"/>
<path d="M810.6 373.6 Q814 369 819 366.5 Q822.5 364.6 826.1 363.9"/>
<path d="M811.1 376.3 L819.5 376.3" stroke-width="2.2"/>
<path d="M812 364.8 L813.3 371.9" stroke-width="1.3"/>
<path d="M817.7 379.4 L823.5 378.9"/>
<path d="M825.7 377.6 L829.2 381.2" stroke-width="1.4"/>
</g>
<g transform="translate(-800,-345)" fill="#222">
<circle cx="819" cy="360.8" r="1.3"/><circle cx="820.4" cy="363" r="0.8"/><circle cx="826.3" cy="359" r="1"/><circle cx="829" cy="361.7" r="1.5"/>
<circle cx="823" cy="373.6" r="2"/><rect x="827" y="369" width="3.2" height="3.2" transform="rotate(20 828.6 370.6)"/><path d="M830 377.5 L832 373.8 L833.4 377.2 Z"/>
</g></svg>
<svg class="a" style="left:961px;top:357px;" width="40" height="32" viewBox="0 0 40 32"><g fill="none" stroke="#6b7280" stroke-width="2"><rect x="4" y="3" width="5" height="5" rx="2"/><rect x="4" y="13" width="5" height="5" rx="2"/><rect x="4" y="25" width="5" height="5" rx="2"/></g><g fill="#6b7280"><rect x="16" y="3" width="22" height="2.5"/><rect x="16" y="15" width="22" height="2.5"/><rect x="16" y="27" width="22" height="2.5"/></g></svg>
<span class="t" style="left:1015.5px;top:363.29px;font-size:23.87px;font-weight:400;color:#6b7280;letter-spacing:0.676px;">Тип отображения:</span>
<span class="t" style="left:1232.1px;top:363.29px;font-size:23.87px;font-weight:700;color:#6b7280;letter-spacing:-0.356px;">Таблица</span>
<svg class="a" style="left:1354px;top:364px;" width="26" height="20" viewBox="0 0 26 20"><path d="M4 5 L13 14 L22 5" fill="none" stroke="#6b7280" stroke-width="2.2"/></svg>
<div class="a" style="left:1504px;top:349px;width:364px;height:40px;border:2px solid #bdbdbd;box-sizing:border-box;border-radius:20px;"></div>
<svg class="a" style="left:1530px;top:355px;" width="30" height="30" viewBox="0 0 30 30"><circle cx="12.6" cy="12.2" r="8.3" fill="none" stroke="#7a8a99" stroke-width="2"/><line x1="18.6" y1="18.2" x2="25" y2="24.8" stroke="#7a8a99" stroke-width="2.2"/></svg>
<span class="t" style="left:1560.9px;top:360.03px;font-size:23.36px;font-weight:400;color:#666;letter-spacing:0.161px;">Поиск</span>
<svg class="a" style="left:1911px;top:351px;" width="36" height="36" viewBox="0 0 36 36"><g fill="none" stroke="#222" stroke-width="2"><path d="M4 23 V31 Q4 33 6 33 H30 Q32 33 32 31 V23"/><line x1="18" y1="3" x2="18" y2="23"/><path d="M10 11 L18 3 L26 11"/></g></svg>
<svg class="a" style="left:1980px;top:351px;" width="36" height="36" viewBox="0 0 36 36"><path d="M33.20 18.00 L33.19 17.70 L33.15 17.40 L33.08 17.11 L32.99 16.82 L32.87 16.54 L32.72 16.26 L32.55 15.99 L32.36 15.73 L32.14 15.48 L31.89 15.24 L31.62 15.01 L31.33 14.80 L31.01 14.60 L30.67 14.43 L30.30 14.27 L29.90 14.13 L29.46 14.02 L28.99 13.95 L28.44 13.91 L27.61 14.02 L28.27 13.51 L28.63 13.10 L28.92 12.70 L29.15 12.32 L29.33 11.94 L29.48 11.57 L29.60 11.20 L29.69 10.84 L29.75 10.48 L29.78 10.13 L29.78 9.79 L29.76 9.45 L29.72 9.13 L29.64 8.82 L29.55 8.52 L29.43 8.24 L29.29 7.97 L29.13 7.71 L28.95 7.47 L28.75 7.25 L28.53 7.05 L28.29 6.87 L28.03 6.71 L27.76 6.57 L27.48 6.45 L27.18 6.36 L26.87 6.28 L26.55 6.24 L26.21 6.22 L25.87 6.22 L25.52 6.25 L25.16 6.31 L24.80 6.40 L24.43 6.52 L24.06 6.67 L23.68 6.85 L23.30 7.08 L22.90 7.37 L22.49 7.73 L21.98 8.39 L22.09 7.56 L22.05 7.01 L21.98 6.54 L21.87 6.10 L21.73 5.70 L21.57 5.33 L21.40 4.99 L21.20 4.67 L20.99 4.38 L20.76 4.11 L20.52 3.86 L20.27 3.64 L20.01 3.45 L19.74 3.28 L19.46 3.13 L19.18 3.01 L18.89 2.92 L18.60 2.85 L18.30 2.81 L18.00 2.80 L17.70 2.81 L17.40 2.85 L17.11 2.92 L16.82 3.01 L16.54 3.13 L16.26 3.28 L15.99 3.45 L15.73 3.64 L15.48 3.86 L15.24 4.11 L15.01 4.38 L14.80 4.67 L14.60 4.99 L14.43 5.33 L14.27 5.70 L14.13 6.10 L14.02 6.54 L13.95 7.01 L13.91 7.56 L14.02 8.39 L13.51 7.73 L13.10 7.37 L12.70 7.08 L12.32 6.85 L11.94 6.67 L11.57 6.52 L11.20 6.40 L10.84 6.31 L10.48 6.25 L10.13 6.22 L9.79 6.22 L9.45 6.24 L9.13 6.28 L8.82 6.36 L8.52 6.45 L8.24 6.57 L7.97 6.71 L7.71 6.87 L7.47 7.05 L7.25 7.25 L7.05 7.47 L6.87 7.71 L6.71 7.97 L6.57 8.24 L6.45 8.52 L6.36 8.82 L6.28 9.13 L6.24 9.45 L6.22 9.79 L6.22 10.13 L6.25 10.48 L6.31 10.84 L6.40 11.20 L6.52 11.57 L6.67 11.94 L6.85 12.32 L7.08 12.70 L7.37 13.10 L7.73 13.51 L8.39 14.02 L7.56 13.91 L7.01 13.95 L6.54 14.02 L6.10 14.13 L5.70 14.27 L5.33 14.43 L4.99 14.60 L4.67 14.80 L4.38 15.01 L4.11 15.24 L3.86 15.48 L3.64 15.73 L3.45 15.99 L3.28 16.26 L3.13 16.54 L3.01 16.82 L2.92 17.11 L2.85 17.40 L2.81 17.70 L2.80 18.00 L2.81 18.30 L2.85 18.60 L2.92 18.89 L3.01 19.18 L3.13 19.46 L3.28 19.74 L3.45 20.01 L3.64 20.27 L3.86 20.52 L4.11 20.76 L4.38 20.99 L4.67 21.20 L4.99 21.40 L5.33 21.57 L5.70 21.73 L6.10 21.87 L6.54 21.98 L7.01 22.05 L7.56 22.09 L8.39 21.98 L7.73 22.49 L7.37 22.90 L7.08 23.30 L6.85 23.68 L6.67 24.06 L6.52 24.43 L6.40 24.80 L6.31 25.16 L6.25 25.52 L6.22 25.87 L6.22 26.21 L6.24 26.55 L6.28 26.87 L6.36 27.18 L6.45 27.48 L6.57 27.76 L6.71 28.03 L6.87 28.29 L7.05 28.53 L7.25 28.75 L7.47 28.95 L7.71 29.13 L7.97 29.29 L8.24 29.43 L8.52 29.55 L8.82 29.64 L9.13 29.72 L9.45 29.76 L9.79 29.78 L10.13 29.78 L10.48 29.75 L10.84 29.69 L11.20 29.60 L11.57 29.48 L11.94 29.33 L12.32 29.15 L12.70 28.92 L13.10 28.63 L13.51 28.27 L14.02 27.61 L13.91 28.44 L13.95 28.99 L14.02 29.46 L14.13 29.90 L14.27 30.30 L14.43 30.67 L14.60 31.01 L14.80 31.33 L15.01 31.62 L15.24 31.89 L15.48 32.14 L15.73 32.36 L15.99 32.55 L16.26 32.72 L16.54 32.87 L16.82 32.99 L17.11 33.08 L17.40 33.15 L17.70 33.19 L18.00 33.20 L18.30 33.19 L18.60 33.15 L18.89 33.08 L19.18 32.99 L19.46 32.87 L19.74 32.72 L20.01 32.55 L20.27 32.36 L20.52 32.14 L20.76 31.89 L20.99 31.62 L21.20 31.33 L21.40 31.01 L21.57 30.67 L21.73 30.30 L21.87 29.90 L21.98 29.46 L22.05 28.99 L22.09 28.44 L21.98 27.61 L22.49 28.27 L22.90 28.63 L23.30 28.92 L23.68 29.15 L24.06 29.33 L24.43 29.48 L24.80 29.60 L25.16 29.69 L25.52 29.75 L25.87 29.78 L26.21 29.78 L26.55 29.76 L26.87 29.72 L27.18 29.64 L27.48 29.55 L27.76 29.43 L28.03 29.29 L28.29 29.13 L28.53 28.95 L28.75 28.75 L28.95 28.53 L29.13 28.29 L29.29 28.03 L29.43 27.76 L29.55 27.48 L29.64 27.18 L29.72 26.87 L29.76 26.55 L29.78 26.21 L29.78 25.87 L29.75 25.52 L29.69 25.16 L29.60 24.80 L29.48 24.43 L29.33 24.06 L29.15 23.68 L28.92 23.30 L28.63 22.90 L28.27 22.49 L27.61 21.98 L28.44 22.09 L28.99 22.05 L29.46 21.98 L29.90 21.87 L30.30 21.73 L30.67 21.57 L31.01 21.40 L31.33 21.20 L31.62 20.99 L31.89 20.76 L32.14 20.52 L32.36 20.27 L32.55 20.01 L32.72 19.74 L32.87 19.46 L32.99 19.18 L33.08 18.89 L33.15 18.60 L33.19 18.30 Z" fill="none" stroke="#222" stroke-width="2" stroke-linejoin="round"/><circle cx="18" cy="18" r="5.2" fill="none" stroke="#222" stroke-width="2"/></svg>
<div class="a" style="left:780px;top:415px;width:1256px;height:2px;background:#e3e6ea;"></div>
<span class="t" style="left:803.8px;top:450.71px;font-size:24.91px;font-weight:400;color:#111;letter-spacing:1.114px;">Отобрать объекты с популярностью выше</span>
<div class="a" style="left:1342px;top:441px;width:80px;height:48px;border:2px solid #c0c0c0;box-sizing:border-box;"></div>
<span class="t" style="left:1376.0px;top:450.51px;font-size:24.91px;font-weight:400;color:#111;letter-spacing:0.000px;">0</span>
<span class="t" style="left:1428.8px;top:450.51px;font-size:24.91px;font-weight:400;color:#111;letter-spacing:0.000px;">%</span>
<div class="a" style="left:1476px;top:439px;width:107px;height:52px;background:#05b1da;border-radius:7px;"></div>
<span class="t" style="left:1490.3px;top:454.11px;font-size:24.91px;font-weight:400;color:#fff;letter-spacing:-0.110px;-webkit-text-stroke:0.4px #fff;">Расчет</span>
<span class="t" style="left:1705.1px;top:453.71px;font-size:24.91px;font-weight:400;color:#111;letter-spacing:0.248px;font-style:italic;">Отобрано объектов: 172</span>
<div class="a" style="left:800px;top:515px;width:1216px;height:2px;background:#e3e6ea;"></div>
<span class="t" style="left:803.8px;top:554.51px;font-size:24.91px;font-weight:400;color:#111;letter-spacing:1.072px;">Объектов в правилах:</span>
<div class="a" style="left:1106.0px;top:541px;width:42.5px;height:48px;background:#5677d6;border-radius:4px;"></div>
<span class="t" style="left:1120.1px;top:553.71px;font-size:24.91px;font-weight:400;color:#fff;letter-spacing:0.000px;">1</span>
<div class="a" style="left:1156.5px;top:541px;width:42.5px;height:48px;background:#5677d6;border-radius:4px;"></div>
<span class="t" style="left:1170.0px;top:553.71px;font-size:24.91px;font-weight:400;color:#fff;letter-spacing:0.000px;">2</span>
<div class="a" style="left:1207.0px;top:541px;width:42.5px;height:48px;background:#5677d6;border-radius:4px;"></div>
<span class="t" style="left:1220.7px;top:553.71px;font-size:24.91px;font-weight:400;color:#fff;letter-spacing:0.000px;">3</span>
<div class="a" style="left:1257.5px;top:541px;width:42.5px;height:48px;background:#5677d6;border-radius:4px;"></div>
<span class="t" style="left:1271.5px;top:553.71px;font-size:24.91px;font-weight:400;color:#fff;letter-spacing:0.000px;">4</span>
<div class="a" style="left:1308.0px;top:541px;width:42.5px;height:48px;background:#5677d6;border-radius:4px;"></div>
<span class="t" style="left:1321.7px;top:553.71px;font-size:24.91px;font-weight:400;color:#fff;letter-spacing:0.000px;">5</span>
<div class="a" style="left:770px;top:625px;width:1275px;height:2px;background:#e2e5ea;"></div>
<div class="a" style="left:770px;top:627px;width:1275px;height:60px;background:#f5f7fa;"></div>
<div class="a" style="left:770px;top:687px;width:1275px;height:2px;background:#e2e5ea;"></div>
<div class="a" style="left:1192px;top:627px;width:2px;height:718px;background:#e2e5ea;"></div>
<div class="a" style="left:1474px;top:627px;width:2px;height:718px;background:#e2e5ea;"></div>
<div class="a" style="left:1756px;top:627px;width:2px;height:718px;background:#e2e5ea;"></div>
<span class="t" style="left:799.7px;top:647.21px;font-size:24.91px;font-weight:400;color:#5d636b;letter-spacing:-0.434px;">Состав</span>
<span class="t" style="left:1223.0px;top:647.21px;font-size:24.91px;font-weight:400;color:#5d636b;letter-spacing:0.135px;">Поддержка</span>
<span class="t" style="left:1505.8px;top:647.21px;font-size:24.91px;font-weight:400;color:#5d636b;letter-spacing:0.223px;">Достоверность</span>
<span class="t" style="left:1787.8px;top:647.21px;font-size:24.91px;font-weight:400;color:#5d636b;letter-spacing:-0.322px;">Лифт</span>
<svg class="a" style="left:1446.4px;top:644.6px;" width="16" height="27" viewBox="0 0 16 27"><path d="M0.4 10.8 L8 0.3 L15.6 10.8 Z M0.4 16.2 L8 26.7 L15.6 16.2 Z" fill="#222"/></svg>
<svg class="a" style="left:1728.3px;top:644.6px;" width="16" height="27" viewBox="0 0 16 27"><path d="M0.4 10.8 L8 0.3 L15.6 10.8 Z M0.4 16.2 L8 26.7 L15.6 16.2 Z" fill="#222"/></svg>
<svg class="a" style="left:2016.5px;top:644.6px;" width="16" height="27" viewBox="0 0 16 27"><path d="M0.4 10.8 L8 0.3 L15.6 10.8 Z M0.4 16.2 L8 26.7 L15.6 16.2 Z" fill="#222"/></svg>
<span class="t" style="left:809.7px;top:705.51px;font-size:24.91px;font-weight:400;color:#5d636b;letter-spacing:0.871px;">Зодчий</span>
<span class="t" style="left:1205.4px;top:705.51px;font-size:24.91px;font-weight:400;color:#5d636b;letter-spacing:0.000px;">29.41</span>
<span class="t" style="left:1487.9px;top:705.51px;font-size:24.91px;font-weight:400;color:#5d636b;letter-spacing:0.000px;">0.00</span>
<span class="t" style="left:1769.9px;top:705.51px;font-size:24.91px;font-weight:400;color:#5d636b;letter-spacing:0.000px;">0.00</span>
<div class="a" style="left:770px;top:745px;width:1275px;height:2px;background:#e2e5ea;"></div>
<span class="t" style="left:808.5px;top:765.51px;font-size:24.91px;font-weight:400;color:#5d636b;letter-spacing:-0.131px;">ПП Газ-1</span>
<span class="t" style="left:1204.8px;top:765.51px;font-size:24.91px;font-weight:400;color:#5d636b;letter-spacing:0.000px;">12.83</span>
<span class="t" style="left:1487.9px;top:765.51px;font-size:24.91px;font-weight:400;color:#5d636b;letter-spacing:0.000px;">0.00</span>
<span class="t" style="left:1769.9px;top:765.51px;font-size:24.91px;font-weight:400;color:#5d636b;letter-spacing:0.000px;">0.00</span>
<div class="a" style="left:770px;top:805px;width:1275px;height:2px;background:#e2e5ea;"></div>
<span class="t" style="left:808.5px;top:825.51px;font-size:24.91px;font-weight:400;color:#5d636b;letter-spacing:0.497px;">Проектный институт Башкирг...</span>
<span class="t" style="left:1204.8px;top:825.51px;font-size:24.91px;font-weight:400;color:#5d636b;letter-spacing:0.000px;">11.76</span>
<span class="t" style="left:1487.9px;top:825.51px;font-size:24.91px;font-weight:400;color:#5d636b;letter-spacing:0.000px;">0.00</span>
<span class="t" style="left:1769.9px;top:825.51px;font-size:24.91px;font-weight:400;color:#5d636b;letter-spacing:0.000px;">0.00</span>
<div class="a" style="left:770px;top:865px;width:1275px;height:2px;background:#e2e5ea;"></div>
<span class="t" style="left:808.5px;top:885.51px;font-size:24.91px;font-weight:400;color:#5d636b;letter-spacing:0.479px;">Инженерный центр ТехПроект</span>
<span class="t" style="left:1205.5px;top:885.51px;font-size:24.91px;font-weight:400;color:#5d636b;letter-spacing:0.000px;">9.63</span>
<span class="t" style="left:1487.9px;top:885.51px;font-size:24.91px;font-weight:400;color:#5d636b;letter-spacing:0.000px;">0.00</span>
<span class="t" style="left:1769.9px;top:885.51px;font-size:24.91px;font-weight:400;color:#5d636b;letter-spacing:0.000px;">0.00</span>
<div class="a" style="left:770px;top:925px;width:1275px;height:2px;background:#e2e5ea;"></div>
<span class="t" style="left:808.5px;top:945.51px;font-size:24.91px;font-weight:400;color:#5d636b;letter-spacing:0.100px;">ГУП Проектный институт Баш...</span>
<span class="t" style="left:1205.5px;top:945.51px;font-size:24.91px;font-weight:400;color:#5d636b;letter-spacing:0.000px;">9.63</span>
<span class="t" style="left:1487.9px;top:945.51px;font-size:24.91px;font-weight:400;color:#5d636b;letter-spacing:0.000px;">0.00</span>
<span class="t" style="left:1769.9px;top:945.51px;font-size:24.91px;font-weight:400;color:#5d636b;letter-spacing:0.000px;">0.00</span>
<div class="a" style="left:770px;top:985px;width:1275px;height:2px;background:#e2e5ea;"></div>
<span class="t" style="left:809.7px;top:1005.51px;font-size:24.91px;font-weight:400;color:#5d636b;letter-spacing:0.871px;">Зодчий</span>
<svg class="a" style="left:904px;top:1011px;" width="24" height="12" viewBox="0 0 24 12"><path d="M2 6 H17" stroke="#5a6069" stroke-width="1.6"/><path d="M16 1 L21.5 6 L16 11 Z" fill="#5a6069"/></svg>
<span class="t" style="left:932.8px;top:1005.51px;font-size:24.91px;font-weight:400;color:#5d636b;letter-spacing:0.540px;">Проектный инстит...</span>
<svg class="a" style="left:783px;top:1006px;" width="16" height="22" viewBox="0 0 16 22"><path d="M2 2.5 L13.5 11 L2 19.5 Z" fill="#5f646b"/></svg>
<span class="t" style="left:1205.6px;top:1005.51px;font-size:24.91px;font-weight:400;color:#5d636b;letter-spacing:0.000px;">8.56</span>
<span class="t" style="left:1487.6px;top:1005.51px;font-size:24.91px;font-weight:400;color:#5d636b;letter-spacing:0.000px;">29.09</span>
<span class="t" style="left:1769.6px;top:1005.51px;font-size:24.91px;font-weight:400;color:#5d636b;letter-spacing:0.000px;">2.47</span>
<div class="a" style="left:770px;top:1045px;width:1275px;height:2px;background:#e2e5ea;"></div>
<span class="t" style="left:808.5px;top:1065.51px;font-size:24.91px;font-weight:400;color:#5d636b;letter-spacing:0.822px;">Башгипроагропром</span>
<span class="t" style="left:1205.6px;top:1065.51px;font-size:24.91px;font-weight:400;color:#5d636b;letter-spacing:0.000px;">8.02</span>
<span class="t" style="left:1487.9px;top:1065.51px;font-size:24.91px;font-weight:400;color:#5d636b;letter-spacing:0.000px;">0.00</span>
<span class="t" style="left:1769.9px;top:1065.51px;font-size:24.91px;font-weight:400;color:#5d636b;letter-spacing:0.000px;">0.00</span>
<div class="a" style="left:770px;top:1105px;width:1275px;height:2px;background:#e2e5ea;"></div>
<span class="t" style="left:809.7px;top:1125.51px;font-size:24.91px;font-weight:400;color:#5d636b;letter-spacing:0.871px;">Зодчий</span>
<svg class="a" style="left:904px;top:1131px;" width="24" height="12" viewBox="0 0 24 12"><path d="M2 6 H17" stroke="#5a6069" stroke-width="1.6"/><path d="M16 1 L21.5 6 L16 11 Z" fill="#5a6069"/></svg>
<span class="t" style="left:932.8px;top:1125.51px;font-size:24.91px;font-weight:400;color:#5d636b;letter-spacing:0.251px;">Проектно-изыскате...</span>
<svg class="a" style="left:783px;top:1126px;" width="16" height="22" viewBox="0 0 16 22"><path d="M2 2.5 L13.5 11 L2 19.5 Z" fill="#5f646b"/></svg>
<span class="t" style="left:1205.6px;top:1125.51px;font-size:24.91px;font-weight:400;color:#5d636b;letter-spacing:0.000px;">8.02</span>
<span class="t" style="left:1487.6px;top:1125.51px;font-size:24.91px;font-weight:400;color:#5d636b;letter-spacing:0.000px;">27.27</span>
<span class="t" style="left:1770.0px;top:1125.51px;font-size:24.91px;font-weight:400;color:#5d636b;letter-spacing:0.000px;">3.40</span>
<div class="a" style="left:770px;top:1165px;width:1275px;height:2px;background:#e2e5ea;"></div>
<span class="t" style="left:808.5px;top:1185.51px;font-size:24.91px;font-weight:400;color:#5d636b;letter-spacing:0.437px;">Проектно-изыскательский ин...</span>
<span class="t" style="left:1205.6px;top:1185.51px;font-size:24.91px;font-weight:400;color:#5d636b;letter-spacing:0.000px;">8.02</span>
<span class="t" style="left:1487.9px;top:1185.51px;font-size:24.91px;font-weight:400;color:#5d636b;letter-spacing:0.000px;">0.00</span>
<span class="t" style="left:1769.9px;top:1185.51px;font-size:24.91px;font-weight:400;color:#5d636b;letter-spacing:0.000px;">0.00</span>
<div class="a" style="left:770px;top:1225px;width:1275px;height:2px;background:#e2e5ea;"></div>
<span class="t" style="left:809.7px;top:1245.51px;font-size:24.91px;font-weight:400;color:#5d636b;letter-spacing:0.871px;">Зодчий</span>
<svg class="a" style="left:904px;top:1251px;" width="24" height="12" viewBox="0 0 24 12"><path d="M2 6 H17" stroke="#5a6069" stroke-width="1.6"/><path d="M16 1 L21.5 6 L16 11 Z" fill="#5a6069"/></svg>
<span class="t" style="left:932.8px;top:1245.51px;font-size:24.91px;font-weight:400;color:#5d636b;letter-spacing:0.268px;">ГУП Проектный ин...</span>
<svg class="a" style="left:783px;top:1246px;" width="16" height="22" viewBox="0 0 16 22"><path d="M2 2.5 L13.5 11 L2 19.5 Z" fill="#5f646b"/></svg>
<span class="t" style="left:1205.4px;top:1245.51px;font-size:24.91px;font-weight:400;color:#5d636b;letter-spacing:0.000px;">7.49</span>
<span class="t" style="left:1487.6px;top:1245.51px;font-size:24.91px;font-weight:400;color:#5d636b;letter-spacing:0.000px;">25.45</span>
<span class="t" style="left:1769.6px;top:1245.51px;font-size:24.91px;font-weight:400;color:#5d636b;letter-spacing:0.000px;">2.64</span>
<div class="a" style="left:770px;top:1285px;width:1275px;height:2px;background:#e2e5ea;"></div>
<span class="t" style="left:809.2px;top:1305.51px;font-size:24.91px;font-weight:400;color:#5d636b;letter-spacing:0.355px;">Спецстройпроект</span>
<span class="t" style="left:1205.4px;top:1305.51px;font-size:24.91px;font-weight:400;color:#5d636b;letter-spacing:0.000px;">7.49</span>
<span class="t" style="left:1487.9px;top:1305.51px;font-size:24.91px;font-weight:400;color:#5d636b;letter-spacing:0.000px;">0.00</span>
<span class="t" style="left:1769.9px;top:1305.51px;font-size:24.91px;font-weight:400;color:#5d636b;letter-spacing:0.000px;">0.00</span>
<div class="a" style="left:2036px;top:687px;width:8px;height:238px;background:#c8ccd1;"></div>
</body></html>
